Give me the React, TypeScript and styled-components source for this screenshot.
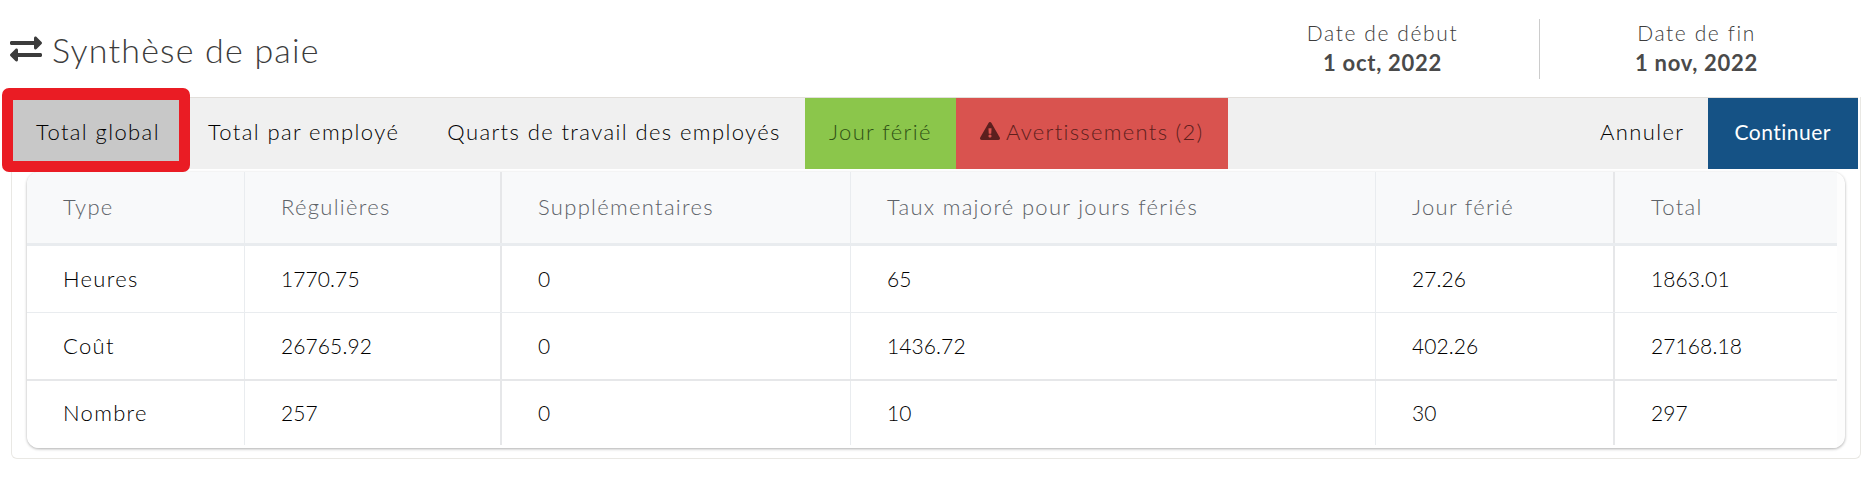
import React from "react";
import styled, { createGlobalStyle } from "styled-components";
import { FaExchangeAlt, FaExclamationTriangle } from "react-icons/fa";

const GlobalStyle = createGlobalStyle`
  body {
    margin: 0;
    background: #fff;
    font-family: Lato, "Open Sans", sans-serif;
  }
`;

const Page = styled.div`
  width: 1868px;
  height: 487px;
  overflow: hidden;
  box-sizing: border-box;
  padding: 0 7px 0 11px;
`;

const Header = styled.div`
  height: 97px;
  display: flex;
  align-items: center;
  justify-content: space-between;
`;

const Title = styled.h1`
  margin: 1px 0 0 -1px;
  display: flex;
  align-items: center;
  gap: 10px;
  font-size: 34px;
  font-weight: 300;
  color: #3c3c3c;
  letter-spacing: 1.2px;
`;

const Dates = styled.div`
  display: flex;
  margin-right: 8px;
  align-self: flex-start;
  margin-top: 19px;
`;

const DateBlock = styled.div<{ $divided?: boolean }>`
  width: 313px;
  height: 60px;
  text-align: center;
  border-right: ${(p) => (p.$divided ? "1px solid #ccc" : "none")};
`;

const DateLabel = styled.div`
  font-size: 21px;
  line-height: 28px;
  font-weight: 300;
  color: #3c3c3c;
  letter-spacing: 1.6px;
`;

const DateValue = styled.div`
  font-size: 22px;
  line-height: 31px;
  font-weight: 700;
  color: #4a4a4a;
  letter-spacing: 0.7px;
`;

const Card = styled.div`
  height: 362px;
  box-sizing: border-box;
  border: 1px solid #e9e8e4;
  border-top: none;
  border-radius: 0 0 6px 6px;
  padding-right: 2px;
`;

const Toolbar = styled.div`
  height: 72px;
  box-sizing: border-box;
  border-top: 1px solid #e2dfdb;
  background: #f0f0f0;
  display: flex;
  font-size: 22px;
  font-weight: 300;
  letter-spacing: 1.4px;
`;

const Tab = styled.div<{ $active?: boolean; $bg?: string; $color?: string }>`
  position: relative;
  display: flex;
  align-items: center;
  gap: 6px;
  padding: 0 24px 5px;
  background: ${(p) => p.$bg || (p.$active ? "#c8c8c8" : "transparent")};
  color: ${(p) => p.$color || "#000"};
`;

const WarningTab = styled(Tab)`
  letter-spacing: 1.3px;
`;

const RedFrame = styled.div`
  position: absolute;
  left: -10px;
  right: -6px;
  top: -10px;
  bottom: -3px;
  border: 11px solid #ea1c24;
  border-top-width: 12px;
  border-radius: 7px;
`;

const Spacer = styled.div`
  flex: 1;
`;

const PrimaryTab = styled(Tab)`
  padding: 0 27px 5px 26px;
  background: #155285;
  color: #fff;
  font-size: 21px;
  font-weight: 400;
  letter-spacing: 0.5px;
`;

const TableBox = styled.div`
  margin: 3px 13px 0 15px;
  height: 276px;
  box-sizing: border-box;
  padding-right: 8px;
  border-radius: 12px;
  background: #fdfdfd;
  box-shadow: 0 1px 3px rgba(0, 0, 0, 0.32);
  overflow: hidden;
`;

const Row = styled.div<{ $head?: boolean; $height: number; $last?: boolean; $thick?: boolean }>`
  display: grid;
  grid-template-columns: 218px 257px 349px 525px 239px 1fr;
  height: ${(p) => p.$height}px;
  box-sizing: border-box;
  background: ${(p) => (p.$head ? "#f8f9fa" : "#fff")};
  color: ${(p) => (p.$head ? "#5d6268" : "#000")};
  border-bottom: ${(p) =>
    p.$last ? "none" : p.$head ? "3px solid #e9ecef" : p.$thick ? "2px solid #e6e7e9" : "1px solid #e9ecef"};
  padding-bottom: ${(p) => (p.$last ? 3 : 0)}px;
`;

const Cell = styled.div<{ $numeric?: boolean }>`
  display: flex;
  align-items: center;
  padding: 0 0 2px 36px;
  font-size: ${(p) => (p.$numeric ? 21 : 22)}px;
  font-weight: 300;
  letter-spacing: ${(p) => (p.$numeric ? 0.1 : 1.3)}px;
  border-right: 1px solid #e9ecef;

  &:nth-child(2),
  &:nth-child(5) {
    border-right: 2px solid #e6e7e9;
  }

  &:last-child {
    border-right: none;
  }
`;

const columns = ["Type", "Régulières", "Supplémentaires", "Taux majoré pour jours fériés", "Jour férié", "Total"];

const rows = [
  ["Heures", "1770.75", "0", "65", "27.26", "1863.01"],
  ["Coût", "26765.92", "0", "1436.72", "402.26", "27168.18"],
  ["Nombre", "257", "0", "10", "30", "297"],
];

const App = () => {
  return (
    <Page>
      <GlobalStyle />
      <Header>
        <Title>
          <FaExchangeAlt size={32} />
          Synthèse de paie
        </Title>
        <Dates>
          <DateBlock $divided>
            <DateLabel>Date de début</DateLabel>
            <DateValue>1 oct, 2022</DateValue>
          </DateBlock>
          <DateBlock>
            <DateLabel>Date de fin</DateLabel>
            <DateValue>1 nov, 2022</DateValue>
          </DateBlock>
        </Dates>
      </Header>
      <Card>
        <Toolbar>
          <Tab $active>
            Total global
            <RedFrame />
          </Tab>
          <Tab>Total par employé</Tab>
          <Tab>Quarts de travail des employés</Tab>
          <Tab $bg="#8bc64b" $color="#2f5215">
            Jour férié
          </Tab>
          <WarningTab $bg="#d9534f" $color="#5e1f1d">
            <FaExclamationTriangle size={20} color="#5c1f1e" />
            Avertissements (2)
          </WarningTab>
          <Spacer />
          <Tab>Annuler</Tab>
          <PrimaryTab>Continuer</PrimaryTab>
        </Toolbar>
        <TableBox>
          <Row $head $height={74}>
            {columns.map((c) => (
              <Cell key={c}>{c}</Cell>
            ))}
          </Row>
          {rows.map((r, i) => (
            <Row key={r[0]} $height={i === 1 ? 68 : 67} $last={i === 2} $thick={i === 1}>
              {r.map((v, j) => (
                <Cell key={j} $numeric={j > 0}>
                  {v}
                </Cell>
              ))}
            </Row>
          ))}
        </TableBox>
      </Card>
    </Page>
  );
};

export default App;
